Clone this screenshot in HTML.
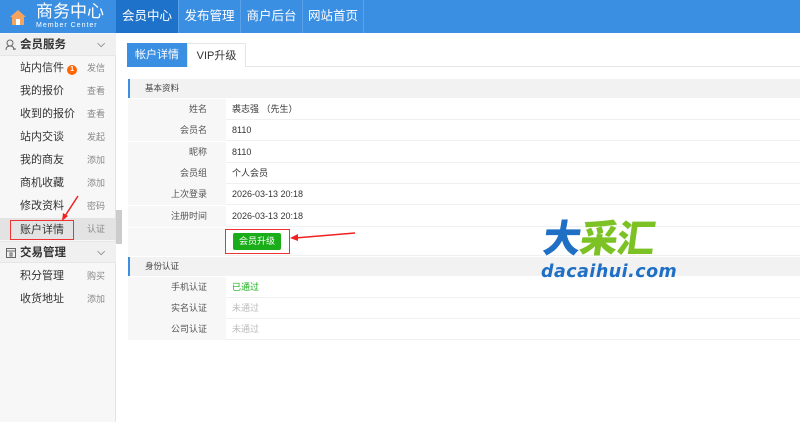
<!DOCTYPE html>
<html><head><meta charset="utf-8"><style>
*{margin:0;padding:0;box-sizing:border-box}
body{width:800px;height:422px;overflow:hidden;background:#fff;font-family:"Liberation Sans","Noto Sans CJK SC",sans-serif;position:relative;color:#333}
.hd{position:absolute;left:0;top:0;width:800px;height:33px;background:#3b8fe2}
.logo{position:absolute;left:36px;top:2px;color:#fff;font-size:17px;line-height:20px}
.logo small{display:block;font-size:7px;line-height:8px;letter-spacing:1px}
.nav a{position:absolute;top:0;height:33px;line-height:33px;color:#fff;font-size:12.5px;text-align:center}
.side{position:absolute;left:0;top:33px;width:116px;height:389px;background:#f7f7f7;border-right:1px solid #e3e3e3}
.it{position:absolute;left:0;width:116px;height:22px;line-height:22px;font-size:11px;color:#333}
.it span{position:absolute;left:20px}
.it i{position:absolute;right:11px;font-style:normal;font-size:9px;color:#888}
.sec{font-weight:bold;font-size:11.5px;background:#f0f0f0;border-bottom:1px solid #e6e6e6}
.row{position:absolute;left:128px;width:672px;height:21px;border-bottom:1px solid #f0f0f0;font-size:9px;line-height:21px}
.row .l{position:absolute;left:0;width:98px;height:21px;background:#f7f7f7;text-align:right;padding-right:19px;color:#555}
.row .v{position:absolute;left:104px}
.hh{position:absolute;left:128px;width:672px;height:19px;background:#f2f2f2;border-left:2px solid #3b8fe2;font-size:8.5px;line-height:19px;padding-left:15px;color:#444}
</style></head><body>
<div class="hd">
<svg style="position:absolute;left:9px;top:9px" width="18" height="16" viewBox="0 0 18 16"><path d="M9 1L1 8h2v8h12V8h2z" fill="#f4a460"/><rect x="7" y="10" width="4" height="6" fill="#fff"/></svg>
<div class="logo">商务中心<small>Member Center</small></div>
<div class="nav"><a style="left:116px;width:62px;background:#1f72c9">会员中心</a><a style="left:178px;width:62px;border-left:1px solid #5aa2ea">发布管理</a><a style="left:240px;width:62px;border-left:1px solid #5aa2ea">商户后台</a><a style="left:302px;width:62px;border-left:1px solid #5aa2ea;border-right:1px solid #5aa2ea">网站首页</a></div>
</div>
<div class="side">
<div class="it sec" style="top:1px"><svg style="position:absolute;left:5px;top:5px" width="12" height="12" viewBox="0 0 12 12"><circle cx="5" cy="4" r="3" fill="none" stroke="#666"/><path d="M1 11c0-3 2-4 4-4s4 1 4 4" fill="none" stroke="#666"/><path d="M8 10h3" stroke="#666"/></svg><span style="left:20px">会员服务</span><i style="font-size:10px">⌵</i></div>
<div class="it" style="top:24px"><span>站内信件 <b style="display:inline-block;width:10px;height:10px;border-radius:5px;background:#f60;color:#fff;font-size:7px;line-height:10px;text-align:center">1</b></span><i>发信</i></div>
<div class="it" style="top:47px"><span>我的报价</span><i>查看</i></div>
<div class="it" style="top:70px"><span>收到的报价</span><i>查看</i></div>
<div class="it" style="top:93px"><span>站内交谈</span><i>发起</i></div>
<div class="it" style="top:116px"><span>我的商友</span><i>添加</i></div>
<div class="it" style="top:139px"><span>商机收藏</span><i>添加</i></div>
<div class="it" style="top:162px"><span>修改资料</span><i>密码</i></div>
<div class="it" style="top:185px;background:#e3e3e3"><span style="left:10px;padding:0 9px;border:1px solid #e33;line-height:18px;top:2px">账户详情</span><i>认证</i></div>
<div class="it sec" style="top:208px;border-top:1px solid #e6e6e6"><svg style="position:absolute;left:5px;top:5px" width="12" height="12" viewBox="0 0 12 12"><rect x="1.5" y="1.5" width="9" height="9" fill="none" stroke="#666"/><path d="M1.5 4h9M5 6h2v3H5z" fill="none" stroke="#666"/></svg><span>交易管理</span><i style="font-size:10px">⌵</i></div>
<div class="it" style="top:232px"><span>积分管理</span><i>购买</i></div>
<div class="it" style="top:255px"><span>收货地址</span><i>添加</i></div>
</div>
<div style="position:absolute;left:116px;top:210px;width:6px;height:34px;background:#ccc"></div>
<svg style="position:absolute;left:0;top:0" width="800" height="422"><path d="M78 196L65 216" stroke="#e22" stroke-width="1.5"/><path d="M62 221l1-8 5 3z" fill="#e22"/><path d="M355 233L295 238" stroke="#e22" stroke-width="1.5"/><path d="M290 238l8-4 0 7z" fill="#e22"/></svg>
<div style="position:absolute;left:127px;top:66px;width:673px;border-bottom:1px solid #e5e5e5"></div>
<div style="position:absolute;left:127px;top:43px;width:60px;height:24px;background:#3b8fe2;color:#fff;font-size:11px;line-height:24px;text-align:center">帐户详情</div>
<div style="position:absolute;left:187px;top:43px;width:59px;height:24px;border:1px solid #e5e5e5;border-bottom:none;background:#fff;font-size:11px;line-height:24px;text-align:center">VIP升级</div>
<div class="hh" style="top:79px">基本资料</div>
<div class="row" style="top:99px"><div class="l">姓名</div><div class="v">裘志强 （先生）</div></div>
<div class="row" style="top:120px"><div class="l">会员名</div><div class="v">8110</div></div>
<div class="row" style="top:142px"><div class="l">昵称</div><div class="v">8110</div></div>
<div class="row" style="top:163px"><div class="l">会员组</div><div class="v">个人会员</div></div>
<div class="row" style="top:184px"><div class="l">上次登录</div><div class="v">2026-03-13 20:18</div></div>
<div class="row" style="top:206px"><div class="l">注册时间</div><div class="v">2026-03-13 20:18</div></div>
<div class="row" style="top:228px;height:28px"><div class="l" style="height:28px"></div></div>
<div style="position:absolute;left:225px;top:229px;width:65px;height:25px;border:1px solid #e33"></div>
<div style="position:absolute;left:233px;top:233px;width:48px;height:17px;background:#1aad19;border-radius:2px;color:#fff;font-size:9px;line-height:17px;text-align:center">会员升级</div>
<div class="hh" style="top:257px">身份认证</div>
<div class="row" style="top:277px"><div class="l">手机认证</div><div class="v" style="color:#1aad19">已通过</div></div>
<div class="row" style="top:298px"><div class="l">实名认证</div><div class="v" style="color:#bbb">未通过</div></div>
<div class="row" style="top:319px"><div class="l">公司认证</div><div class="v" style="color:#bbb">未通过</div></div>
<div style="position:absolute;left:543px;top:220px;font-size:38px;font-weight:900;line-height:40px;letter-spacing:-1px;transform:skewX(-8deg)"><span style="color:#1f6fc5">大</span><span style="color:#7cc225">采汇</span></div>
<div style="position:absolute;left:541px;top:261px;font-size:18px;font-weight:bold;font-style:italic;color:#1f6fc5;letter-spacing:0.5px;font-family:'DejaVu Sans',sans-serif;transform:scaleX(0.97);transform-origin:left">dacaihui.com</div>
</body></html>
